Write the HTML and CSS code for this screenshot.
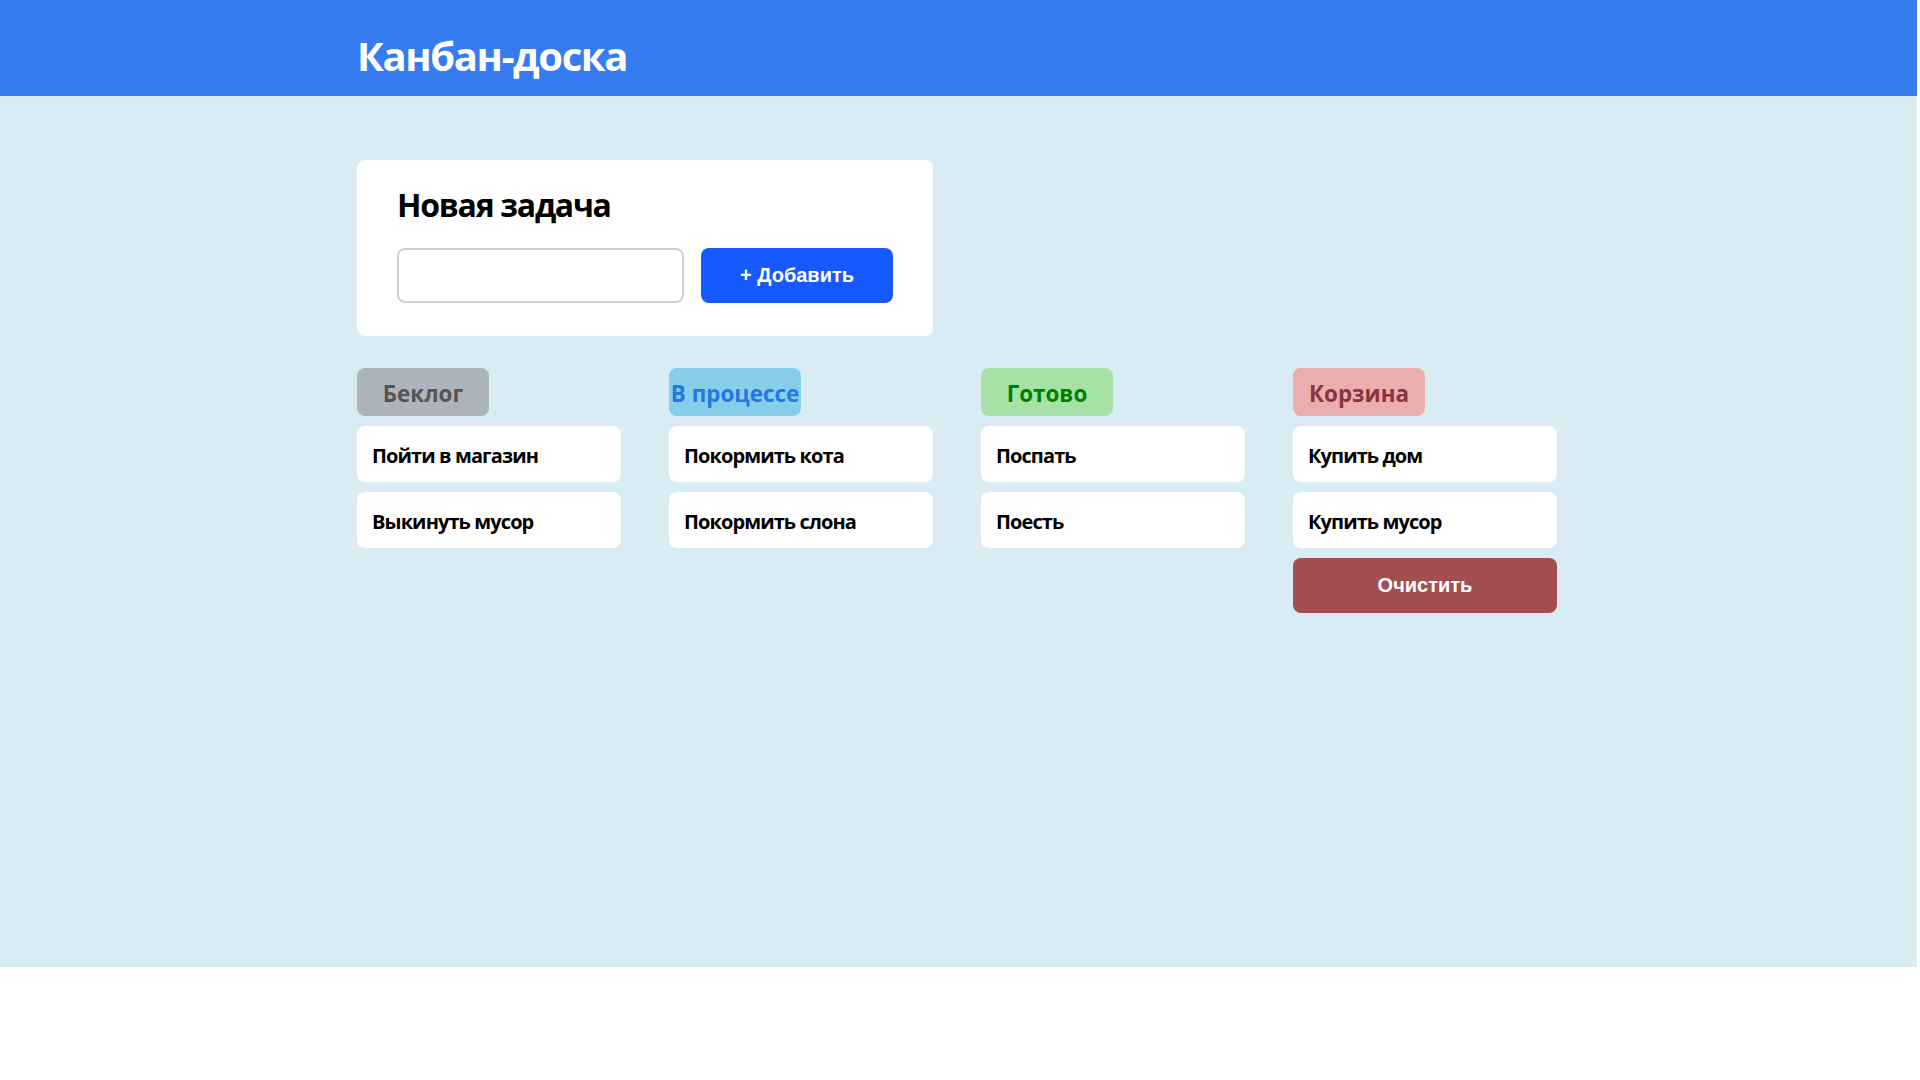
FILE: index.html
```html
<!DOCTYPE html>
<html lang="ru">
<head>
<meta charset="utf-8">
<title>Канбан-доска</title>
<link rel="stylesheet" href="styles.css">
</head>
<body>
<div class="app">
  <header class="header">
    <div class="container">
      <h1 class="logo">Канбан-доска</h1>
    </div>
  </header>
  <main class="container main">
    <section class="new-task">
      <h2 class="new-task__title">Новая задача</h2>
      <form class="new-task__form">
        <input class="new-task__input" type="text">
        <button class="btn btn--add" type="button">+ Добавить</button>
      </form>
    </section>
    <section class="board">
      <div class="column">
        <div class="tag tag--backlog">Беклог</div>
        <div class="task">Пойти в магазин</div>
        <div class="task">Выкинуть мусор</div>
      </div>
      <div class="column">
        <div class="tag tag--progress">В процессе</div>
        <div class="task">Покормить кота</div>
        <div class="task">Покормить слона</div>
      </div>
      <div class="column">
        <div class="tag tag--done">Готово</div>
        <div class="task">Поспать</div>
        <div class="task">Поесть</div>
      </div>
      <div class="column">
        <div class="tag tag--trash">Корзина</div>
        <div class="task">Купить дом</div>
        <div class="task">Купить мусор</div>
        <button class="btn btn--clear" type="button">Очистить</button>
      </div>
    </section>
  </main>
</div>
</body>
</html>
```

FILE: styles.css
```css
* { box-sizing: border-box; }

body {
  margin: 0;
  background: #ffffff;
  font-family: "Open Sans", "Noto Sans", sans-serif;
  color: #000;
}

.app {
  width: 1917px;
  min-height: 967px;
  background: #d9ecf3;
}

.container {
  width: 1200px;
  margin-left: calc(50% - 601.5px);
}

.header {
  height: 96px;
  background: #367bf0;
  padding-top: 28px;
}

.logo {
  margin: 0;
  font-size: 40px;
  font-weight: 700;
  color: #ffffff;
  line-height: normal;
  letter-spacing: -0.035em;
}

.main {
  padding-top: 64px;
}

.new-task {
  width: 576px;
  background: #ffffff;
  border-radius: 8px;
  padding: 25px 40px 33px;
}

.new-task__title {
  margin: 0 0 23px;
  font-size: 32px;
  line-height: 40px;
  font-weight: 700;
  letter-spacing: -0.04em;
}

.new-task__form {
  display: flex;
  gap: 17px;
}

.new-task__input {
  width: 287px;
  height: 55px;
  border: 2px solid #d0d0d0;
  border-radius: 8px;
  background: #fff;
  outline: none;
}

.btn {
  border: none;
  border-radius: 8px;
  color: #ffffff;
  font-family: "Liberation Sans", Arial, sans-serif;
  font-weight: 700;
  font-size: 20px;
  cursor: pointer;
}

.btn--add {
  width: 192px;
  height: 55px;
  background: #1559ff;
}

.board {
  display: grid;
  grid-template-columns: repeat(4, 264px);
  column-gap: 48px;
  margin-top: 32px;
  align-items: start;
}

.column {
  display: flex;
  flex-direction: column;
  gap: 10px;
}

.tag {
  width: 132px;
  height: 48px;
  padding-top: 2px;
  border-radius: 8px;
  display: flex;
  align-items: center;
  justify-content: center;
  font-size: 22.4px;
  font-weight: 700;
  white-space: nowrap;
}

.tag--backlog { background: #adb4bd; color: #555555; }
.tag--progress { background: #87ceeb; color: #2577e3; }
.tag--done { background: #a6e2a6; color: #008000; }
.tag--trash { background: #eaaeae; color: #8b3343; }

.task {
  height: 56px;
  background: #ffffff;
  border-radius: 8px;
  padding: 2px 15px 0;
  display: flex;
  align-items: center;
  font-size: 20px;
  font-weight: 700;
  letter-spacing: -0.045em;
}

.btn--clear {
  width: 100%;
  height: 55px;
  background: #a34e51;
}
```
